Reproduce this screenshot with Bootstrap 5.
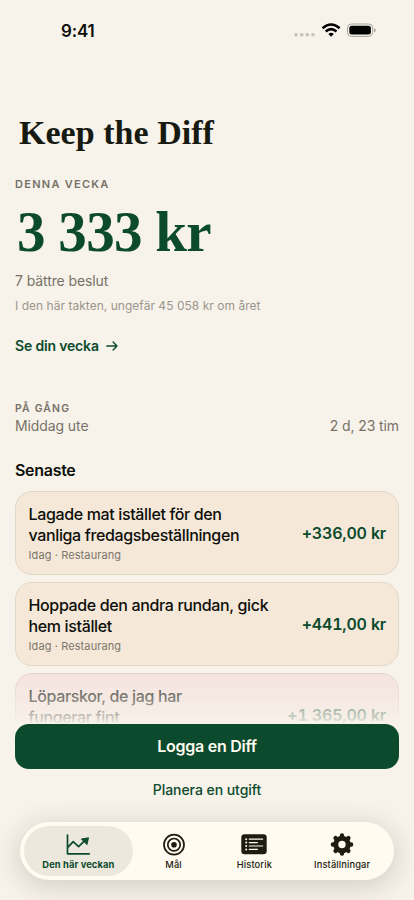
<!DOCTYPE html>
<html lang="sv">
<head>
<meta charset="utf-8">
<meta name="viewport" content="width=device-width, initial-scale=1">
<title>Keep the Diff</title>
<link href="https://cdn.jsdelivr.net/npm/bootstrap@5.3.0/dist/css/bootstrap.min.css" rel="stylesheet">
<style>
body{background:#f7f2ea;font-family:Inter,"Liberation Sans",sans-serif;color:#0d0f0a;overflow:hidden}
.phone{width:414px;height:900px}
.phone>*{flex-shrink:0}
.status{height:60px;padding:1px 37px 0 61px}
.clock{font-size:17px;font-weight:600;letter-spacing:-.2px;line-height:20px}
.screen{padding:52px 15px 0;height:840px}
.serif{font-family:"Liberation Serif",serif;font-weight:700;white-space:nowrap}
.title{font-size:34px;line-height:41px;color:#171a10;letter-spacing:.03px;padding-left:4px;margin:0 0 23px;font-variant-ligatures:none}
.eyebrow{font-size:11px;font-weight:600;line-height:16px;letter-spacing:1.27px;color:#767167}
.total{font-size:57px;line-height:60px;color:#0b4a2c;margin-top:10px;padding-left:2px;letter-spacing:-.7px}
.body-line{font-size:14px;line-height:20px;color:#777268;letter-spacing:-.1px}
.decisions{margin-top:9px}
.pace{font-size:12px;line-height:16px;color:#9b968c;margin-top:7px;letter-spacing:.03px}
.green{color:#0b4a2c}
.week-link{font-size:14px;font-weight:600;line-height:20px;margin-top:22px;gap:7px;letter-spacing:-.17px}
.upcoming{margin-top:44px}
.upcoming .eyebrow{font-size:10.4px;letter-spacing:1.2px;padding-top:1px}
.upcoming .body-line{margin-top:-1px}
.recent{font-size:16px;font-weight:600;line-height:22px;margin:23px 0 10px;letter-spacing:-.3px}
.entries{gap:7.5px}
.entry{height:83.5px;border:1px solid #e3d8c8;border-radius:17px;background:#f5e8d9;padding:0 12px 0 12.5px}
.entry.pink{background:#f5e1de;border-color:#e3d2c4}
.entry-text{padding-top:1.5px}
.what{font-size:16px;font-weight:500;line-height:21px;letter-spacing:-.36px;white-space:nowrap}
.when{font-size:11px;line-height:18px;color:#7c766c;letter-spacing:.1px}
.gain{font-size:16px;font-weight:600;letter-spacing:-.18px;white-space:nowrap;font-variant-numeric:tabular-nums}
.dock{height:227px}
.fade-out{height:51px;background:linear-gradient(rgba(247,242,234,.1),rgba(247,242,234,.45) 45%,rgba(247,242,234,.8) 88%,#f7f2ea)}
.actions{padding:0 15px;background:#f7f2ea;height:176px}
.log-btn{height:45px;border-radius:14px;background:#0b4a2c;color:#fffbf0;font-size:16px;font-weight:600;letter-spacing:-.25px;padding:0 0 1px;border:0}
.plan-btn{font-size:14px;font-weight:500;line-height:20px;margin-top:11px;padding:0;border:0;letter-spacing:-.05px}
.tabs{height:58px;margin:22px 5px 0;padding:4px;border-radius:29px;background:#fffbf0;box-shadow:0 5px 24px 3px rgba(60,55,35,.17)}
.tab{height:50px;border-radius:25px;color:#1e1b10;font-size:9.3px;font-weight:500;line-height:13px;padding-top:6px;white-space:nowrap;letter-spacing:.12px}
.tab svg{height:26px;width:30px}
.tab.current{background:#ece8dd;color:#0b4a2c;width:109px;font-weight:700}
.t2{width:82px}.t3{width:80px}.t4{width:96px}
</style>
</head>
<body>
<div class="phone position-relative d-flex flex-column overflow-hidden">
  <header class="status d-flex align-items-center justify-content-between">
    <span class="clock">9:41</span>
    <svg width="83" height="20" viewBox="0 0 83 20">
      <g fill="#c7c2b6"><circle cx="2" cy="13.8" r="1.8"/><circle cx="7.7" cy="13.8" r="1.8"/><circle cx="13.3" cy="13.8" r="1.8"/><circle cx="19" cy="13.8" r="1.8"/></g>
      <g fill="none" stroke="#000" stroke-width="2.5"><path d="M28.6 7.2Q37.1-.2 45.6 7.2"/><path d="M31.7 10.5Q37.1 5.8 42.5 10.5"/></g>
      <path d="M34.4 12.9Q37.1 10.8 39.8 12.9L37.1 15.8Z"/>
      <rect x="53.5" y="3" width="25.2" height="12.4" rx="4" fill="none" stroke="#a8a49d"/>
      <rect x="55.3" y="4.8" width="21.6" height="8.8" rx="2.5"/>
      <path d="M80 7.2Q81.8 7.7 81.8 9.2T80 11.2Z" fill="#a8a49d"/>
    </svg>
  </header>
  <main class="screen">
    <h1 class="title serif">Keep the Diff</h1>
    <div class="eyebrow">DENNA VECKA</div>
    <div class="total serif">3 333 kr</div>
    <div class="body-line decisions">7 bättre beslut</div>
    <div class="pace">I den här takten, ungefär 45 058 kr om året</div>
    <a class="week-link green d-flex align-items-center text-decoration-none" href="#">Se din vecka
      <svg width="12" height="10" viewBox="0 0 12 10" fill="none" stroke="currentColor" stroke-width="1.4" stroke-linecap="round" stroke-linejoin="round"><path d="M.8 5H11M7.1 1.1 11 5 7.1 8.9"/></svg>
    </a>
    <section class="upcoming">
      <div class="eyebrow">PÅ GÅNG</div>
      <div class="body-line d-flex justify-content-between"><span>Middag ute</span><span>2 d, 23 tim</span></div>
    </section>
    <h2 class="recent">Senaste</h2>
    <div class="entries d-flex flex-column">
      <article class="entry d-flex justify-content-between align-items-center">
        <div class="entry-text"><div class="what">Lagade mat istället för den<br>vanliga fredagsbeställningen</div><div class="when">Idag · Restaurang</div></div>
        <span class="gain green">+336,00 kr</span>
      </article>
      <article class="entry d-flex justify-content-between align-items-center">
        <div class="entry-text"><div class="what">Hoppade den andra rundan, gick<br>hem istället</div><div class="when">Idag · Restaurang</div></div>
        <span class="gain green">+441,00 kr</span>
      </article>
      <article class="entry pink d-flex justify-content-between align-items-center">
        <div class="entry-text"><div class="what">Löparskor, de jag har<br>fungerar fint</div><div class="when">&nbsp;</div></div>
        <span class="gain green">+1 365,00 kr</span>
      </article>
    </div>
  </main>
  <div class="dock position-absolute bottom-0 start-0 w-100">
    <div class="fade-out"></div>
    <div class="actions d-flex flex-column">
      <button class="btn log-btn w-100">Logga en Diff</button>
      <button class="btn plan-btn green align-self-center">Planera en utgift</button>
      <nav class="tabs d-flex">
        <div class="tab current d-flex flex-column align-items-center">
          <svg viewBox="0 0 30 26" fill="none" stroke="currentColor" stroke-width="1.7" stroke-linecap="round" stroke-linejoin="round"><path d="M4.5 3V21.8H26.2M4.8 15.3 10.2 9.6 15.6 14.6 22.2 8.2"/><path d="M18.7 7 25.5 5.8 24 12.3Z" fill="currentColor" stroke-width="1"/></svg>
          Den här veckan
        </div>
        <div class="tab t2 d-flex flex-column align-items-center">
          <svg viewBox="0 0 30 26" fill="none" stroke="currentColor" stroke-width="1.7"><circle cx="15" cy="12.7" r="10"/><circle cx="15" cy="12.7" r="6.2"/><circle cx="15" cy="12.7" r="2.8" fill="currentColor" stroke="none"/></svg>
          Mål
        </div>
        <div class="tab t3 d-flex flex-column align-items-center">
          <svg viewBox="0 0 30 26"><rect x="2.3" y="2.3" width="25.4" height="20" rx="3.2" fill="currentColor"/><g stroke="#fffbf0" stroke-width="1.2" stroke-linecap="round"><path d="M10.3 7.2H23.6M10.3 10.6H18.4M10.3 14H23.6M10.3 17.4H18.4"/></g><g fill="#fffbf0"><circle cx="7.2" cy="7.2" r="1"/><circle cx="7.2" cy="10.6" r="1"/><circle cx="7.2" cy="14" r="1"/><circle cx="7.2" cy="17.4" r="1"/></g></svg>
          Historik
        </div>
        <div class="tab t4 d-flex flex-column align-items-center">
          <svg viewBox="0 0 30 26"><g fill="none" stroke="currentColor"><circle cx="15" cy="12.5" r="6.2" stroke-width="5"/><path stroke-width="4.4" stroke-linecap="round" d="M15 3.4V5M15 20V21.6M5.9 12.5H7.5M22.5 12.5H24.1M8.6 6.1 9.7 7.2M20.3 17.8 21.4 18.9M21.4 6.1 20.3 7.2M9.7 17.8 8.6 18.9"/></g></svg>
          Inställningar
        </div>
      </nav>
    </div>
  </div>
</div>
<script src="https://cdn.jsdelivr.net/npm/bootstrap@5.3.0/dist/js/bootstrap.bundle.min.js"></script>
</body>
</html>
